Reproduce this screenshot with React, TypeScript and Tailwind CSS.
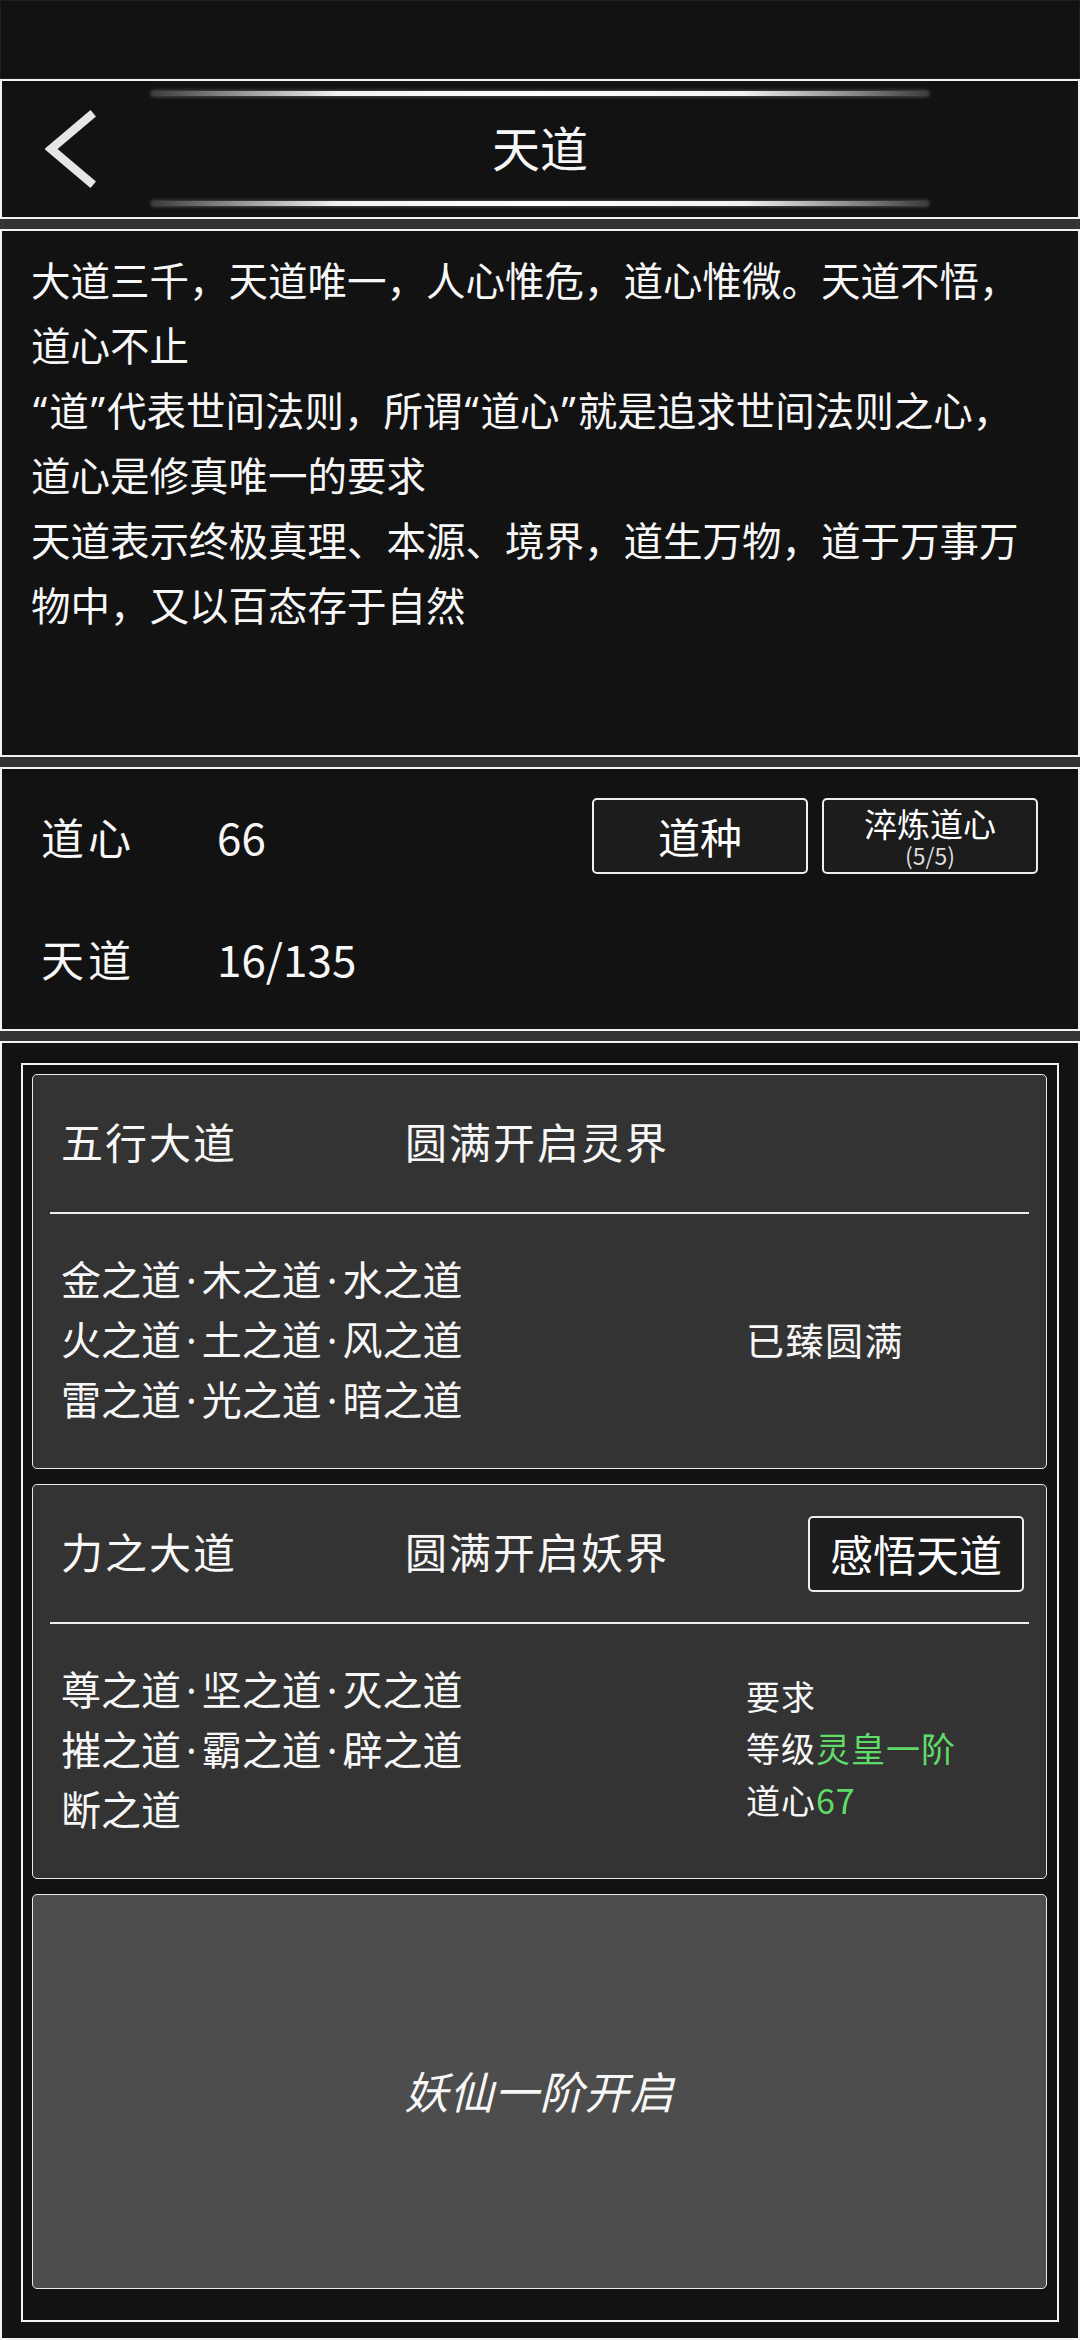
import React from "react";

const descLines = [
  "大道三千，天道唯一，人心惟危，道心惟微。天道不悟，",
  "道心不止",
  "“道”代表世间法则，所谓“道心”就是追求世间法则之心，",
  "道心是修真唯一的要求",
  "天道表示终极真理、本源、境界，道生万物，道于万事万",
  "物中，又以百态存于自然",
];

// quotes and middle dots take the narrow Latin glyphs, as in the game font
function Narrow({ text, marks, gap }: { text: string; marks: string[]; gap?: string }) {
  const parts: React.ReactNode[] = [];
  let buf = "";
  Array.from(text).forEach((ch, i) => {
    if (marks.includes(ch)) {
      if (buf) parts.push(buf);
      buf = "";
      parts.push(
        <span key={i} className={`[font-family:'Noto_Sans',sans-serif] ${gap ?? ""}`}>
          {ch}
        </span>
      );
    } else {
      buf += ch;
    }
  });
  if (buf) parts.push(buf);
  return <>{parts}</>;
}

function GlowLine() {
  return (
    <div className="w-[778px] h-[5px] rounded-full bg-[linear-gradient(90deg,#3a3a3a_0%,#8a8a8a_10%,#f2f2f2_24%,#ffffff_50%,#f2f2f2_76%,#8a8a8a_90%,#3a3a3a_100%)] shadow-[0_0_4px_rgba(255,255,255,0.35)]" />
  );
}

function Header() {
  return (
    <div className="h-[140px] border-2 border-[#f2f2f2] bg-[#121212] flex flex-col items-center pt-[10px] pb-[11px]">
      <GlowLine />
      <div className="flex-1 w-full grid grid-cols-[1fr_auto_1fr] items-center">
        <div className="pl-[43px] flex items-center">
          <svg width="52" height="78" viewBox="0 0 52 78">
            <polyline
              points="45,6 6,39 45,72"
              fill="none"
              stroke="#e6e6e6"
              strokeWidth="8.5"
              strokeLinecap="square"
              strokeLinejoin="miter"
            />
          </svg>
        </div>
        <span className="text-[48px] leading-none pb-[6px]">天道</span>
        <div />
      </div>
      <GlowLine />
    </div>
  );
}

function Description() {
  return (
    <div className="h-[528px] border-2 border-[#f2f2f2] bg-[#121212] pl-[29px] pt-[15px]">
      {descLines.map((l) => (
        <div key={l} className="h-[65px] leading-[65px] text-[39.5px] whitespace-nowrap">
          <Narrow text={l} marks={["“", "”"]} gap="mx-[2px]" />
        </div>
      ))}
    </div>
  );
}

function Stats() {
  return (
    <div className="h-[264px] border-2 border-[#f2f2f2] bg-[#121212] pl-[39px] pr-[40px] pt-[29px] flex flex-col gap-[46px]">
      <div className="h-[76px] flex items-center">
        <span className="w-[176px] text-[43px] tracking-[4px]">道心</span>
        <span className="text-[44px]">66</span>
        <div className="ml-auto flex gap-[14px]">
          <button className="w-[216px] h-[76px] rounded-[5px] border-2 border-[#eeeeee] bg-[#1c1c1c] text-[42px] leading-none text-white">
            道种
          </button>
          <button className="w-[216px] h-[76px] rounded-[5px] border-2 border-[#eeeeee] bg-[#1c1c1c] flex flex-col items-center justify-center text-white">
            <span className="text-[33px] leading-[38px]">淬炼道心</span>
            <span className="text-[23px] leading-[26px] text-[#dddddd]">(5/5)</span>
          </button>
        </div>
      </div>
      <div className="h-[76px] flex items-center">
        <span className="w-[176px] text-[43px] tracking-[4px]">天道</span>
        <span className="text-[44px]">16/135</span>
      </div>
    </div>
  );
}

function DaoList({ lines }: { lines: string[] }) {
  return (
    <div className="w-[685px] flex flex-col">
      {lines.map((l) => (
        <div key={l} className="h-[60px] leading-[60px] text-[40px] whitespace-nowrap">
          <Narrow text={l} marks={["·"]} gap="mx-[5px]" />
        </div>
      ))}
    </div>
  );
}

function Card({
  name,
  realm,
  action,
  lines,
  right,
}: {
  name: string;
  realm: string;
  action?: React.ReactNode;
  lines: string[];
  right: React.ReactNode;
}) {
  return (
    <div className="h-[395px] rounded-[5px] border-[1.5px] border-[#e8e8e8] bg-[#333333] flex flex-col">
      <div className="h-[137px] flex items-center pl-[28px] pr-[22px]">
        <span className="w-[344px] text-[42px] tracking-[2px] pb-[6px]">{name}</span>
        <span className="text-[42px] tracking-[2px] pb-[6px]">{realm}</span>
        {action}
      </div>
      <div className="mx-[17px] h-[2px] bg-[#f0f0f0]" />
      <div className="flex items-center pl-[28px] pt-[34px]">
        <DaoList lines={lines} />
        {right}
      </div>
    </div>
  );
}

export default function App() {
  return (
    <div className="w-[1080px] h-[2340px] bg-[#333333] text-[#f7f7f7] overflow-hidden [font-family:'Noto_Sans_CJK_SC','Noto_Sans',sans-serif] flex flex-col gap-[10px]">
      <div className="flex flex-col">
        <div className="h-[79px] bg-[#111111] border border-[#1e1e1e]" />
        <Header />
      </div>
      <Description />
      <Stats />
      <div className="h-[1299px] border-2 border-[#f2f2f2] bg-[#121212] px-[19px] pt-[20px]">
        <div className="h-[1259px] border-2 border-[#f2f2f2] pl-[9px] pr-[10px] pt-[9px] flex flex-col gap-[15px]">
          <Card
            name="五行大道"
            realm="圆满开启灵界"
            lines={["金之道·木之道·水之道", "火之道·土之道·风之道", "雷之道·光之道·暗之道"]}
            right={<span className="text-[38px] tracking-[1.5px]">已臻圆满</span>}
          />
          <Card
            name="力之大道"
            realm="圆满开启妖界"
            action={
              <button className="ml-auto w-[216px] h-[76px] rounded-[5px] border-2 border-[#eeeeee] bg-[#1c1c1c] text-[43px] leading-none text-white">
                感悟天道
              </button>
            }
            lines={["尊之道·坚之道·灭之道", "摧之道·霸之道·辟之道", "断之道"]}
            right={
              <div className="flex flex-col text-[34px] tracking-[1px]">
                <span className="h-[52px] leading-[52px]">要求</span>
                <span className="h-[52px] leading-[52px]">
                  等级<span className="text-[#5fdc68]">灵皇一阶</span>
                </span>
                <span className="h-[52px] leading-[52px]">
                  道心<span className="text-[#5fdc68]">67</span>
                </span>
              </div>
            }
          />
          <div className="h-[395px] rounded-[5px] border-[1.5px] border-[#e8e8e8] bg-[#4d4d4d] flex items-center justify-center">
            <span className="text-[44px] italic tracking-[1px] pb-[4px]">妖仙一阶开启</span>
          </div>
        </div>
      </div>
    </div>
  );
}
